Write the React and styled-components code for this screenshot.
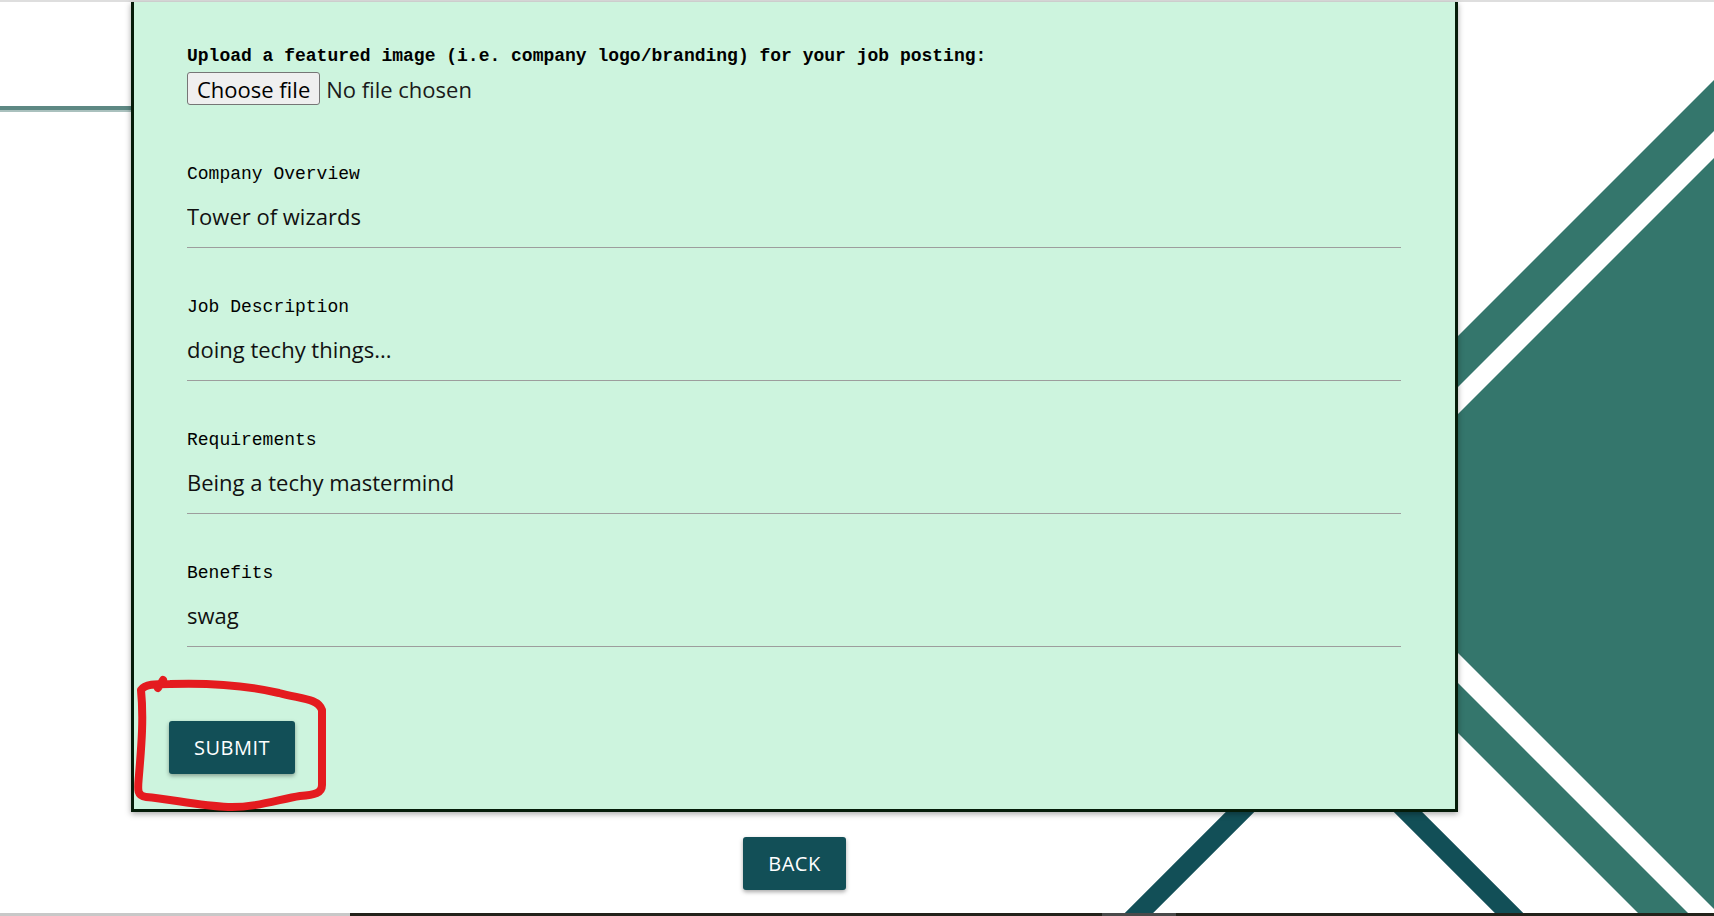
import styled, { createGlobalStyle } from 'styled-components'

const GlobalStyle = createGlobalStyle`
  html, body {
    margin: 0;
    padding: 0;
    background: #fff;
  }
  body {
    font-family: 'Open Sans', 'Noto Sans', sans-serif;
    overflow: hidden;
  }
  * { box-sizing: border-box; }
`

const Page = styled.div`
  position: relative;
  width: 100%;
  height: 100vh;
  overflow: hidden;
  padding-top: 2px;
  background: #fff;
`

const Backdrop = styled.svg`
  position: absolute;
  top: 0;
  left: 0;
  z-index: 0;
`

const Overlay = styled.svg`
  position: absolute;
  top: 0;
  left: 0;
  z-index: 2;
  pointer-events: none;
`

const Main = styled.main`
  position: relative;
  z-index: 1;
  width: 1327px;
  margin-left: 131px;
`

const Card = styled.section`
  background: #cdf4de;
  border: 3px solid #051c09;
  border-top: none;
  box-shadow: 0 2px 6px rgba(0, 0, 0, 0.35);
  padding: 43px 54px 35px 53px;
`

const UploadLabel = styled.p`
  margin: 0 0 5px;
  font-family: 'Liberation Mono', monospace;
  font-weight: 700;
  font-size: 18px;
  line-height: 22px;
  color: #000;
`

const FilePicker = styled.label`
  display: flex;
  align-items: center;
  gap: 6px;
  height: 33px;
  font-family: 'Open Sans', 'Noto Sans', sans-serif;
  font-size: 22px;
  color: #1a1a1a;
  cursor: pointer;

  input {
    display: none;
  }
`

const FileButton = styled.span`
  display: inline-flex;
  align-items: center;
  height: 33px;
  padding: 0 9px;
  color: #000;
  background: #efefef;
  border: 1px solid #767676;
  border-radius: 3px;
`

const Fields = styled.div`
  display: flex;
  flex-direction: column;
  gap: 48px;
  margin-top: 58px;
`

const Field = styled.div`
  display: flex;
  flex-direction: column;
`

const FieldLabel = styled.label`
  font-family: 'Liberation Mono', monospace;
  font-size: 18px;
  line-height: 22px;
  color: #000;
`

const TextInput = styled.input`
  display: block;
  width: 100%;
  height: 63px;
  padding: 0;
  margin: 0;
  border: none;
  border-bottom: 1px solid #9d9d9d;
  background: transparent;
  font-family: 'Open Sans', 'Noto Sans', sans-serif;
  font-size: 22px;
  color: #111;
  outline: none;
`

const Button = styled.button`
  display: inline-flex;
  align-items: center;
  justify-content: center;
  height: 53px;
  padding: 0 25px;
  background: #124f57;
  color: #fff;
  border: none;
  border-radius: 3px;
  box-shadow: 0 2px 4px rgba(0, 0, 0, 0.35);
  font-family: 'Open Sans', 'Noto Sans', sans-serif;
  font-size: 20px;
  letter-spacing: 0.5px;
  text-transform: uppercase;
  cursor: pointer;
`

const SubmitRow = styled.div`
  margin: 74px 0 0 -18px;
`

const BackRow = styled.div`
  display: flex;
  justify-content: center;
  margin-top: 25px;
`

const fields = [
  { label: 'Company Overview', value: 'Tower of wizards' },
  { label: 'Job Description', value: 'doing techy things...' },
  { label: 'Requirements', value: 'Being a techy mastermind' },
  { label: 'Benefits', value: 'swag' },
]

function Decorations() {
  return (
    <Backdrop width="1714" height="916" viewBox="0 0 1714 916">
      <rect x="0" y="0" width="1714" height="2" fill="#dedede" />
      <rect x="0" y="106" width="140" height="4" fill="#5d8883" />
      <rect x="0" y="110" width="140" height="2" fill="#aac1be" />
      <polygon
        points="1714,80 1259.5,534.5 1714,989 1714,939 1310,535 1714,131"
        fill="#34766c"
      />
      <polygon points="1714,158 1338.5,533.5 1714,909" fill="#34766c" />
      <polyline
        points="1126,926 1324,728 1522,926"
        fill="none"
        stroke="#124f57"
        strokeWidth="20"
      />
      <rect x="0" y="913" width="350" height="3" fill="#c8c8c8" />
      <rect x="350" y="913" width="1364" height="3" fill="#23221a" />
      <rect x="1102" y="913" width="74" height="3" fill="#4a4a4a" />
    </Backdrop>
  )
}

function Scribble() {
  return (
    <Overlay width="1714" height="916" viewBox="0 0 1714 916">
      <path
        d="M141,690 C145,684 155,684 170,684 C200,683 240,684 279,693 C300,699 318,698 322,710 L322,785 C322,793 315,795 300,796 C280,799 255,808 228,807 C200,806 170,799 146,797 C136,796 138,788 139,775 C141,750 144,720 141,690 Z M158,688 L163,680"
        fill="none"
        stroke="#e41b1f"
        strokeWidth="8"
        strokeLinecap="round"
        strokeLinejoin="round"
      />
    </Overlay>
  )
}

export default function App() {
  return (
    <Page>
      <GlobalStyle />
      <Decorations />
      <Main>
        <Card>
          <form onSubmit={e => e.preventDefault()}>
            <UploadLabel>
              Upload a featured image (i.e. company logo/branding) for your job posting:
            </UploadLabel>
            <FilePicker>
              <input type="file" accept="image/*" />
              <FileButton>Choose file</FileButton>
              <span>No file chosen</span>
            </FilePicker>
            <Fields>
              {fields.map(f => (
                <Field key={f.label}>
                  <FieldLabel>{f.label}</FieldLabel>
                  <TextInput type="text" defaultValue={f.value} />
                </Field>
              ))}
            </Fields>
            <SubmitRow>
              <Button type="submit">Submit</Button>
            </SubmitRow>
          </form>
        </Card>
        <BackRow>
          <Button type="button">Back</Button>
        </BackRow>
      </Main>
      <Scribble />
    </Page>
  )
}
